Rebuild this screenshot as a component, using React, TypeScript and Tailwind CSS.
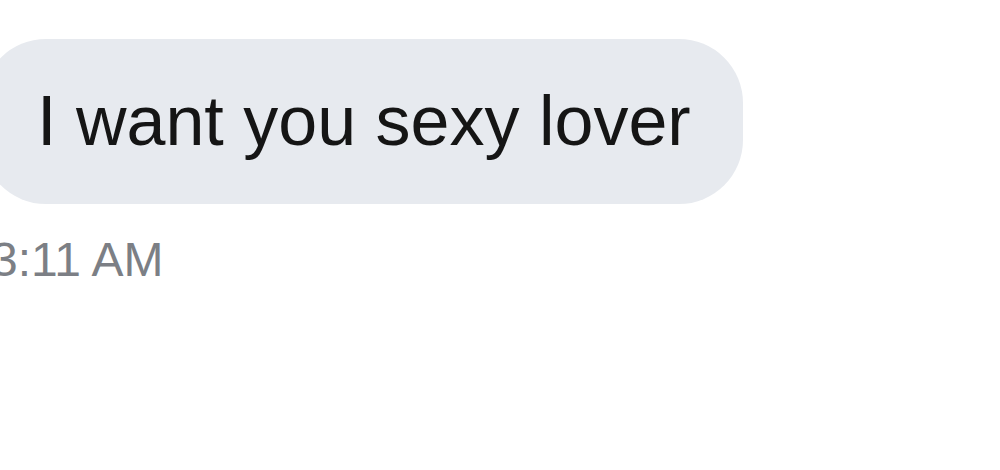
export default function App() {
  return (
    <div className="h-[470px] w-[1000px] overflow-hidden bg-white font-['Liberation_Sans',Arial,sans-serif]">
      <div className="flex flex-col items-start pt-[39px]">
        <div className="ml-[-18px] rounded-[64px] bg-[#e7eaef] pb-[48px] pl-[55px] pr-[52px] pt-[47px]">
          <p className="whitespace-nowrap text-[70px] leading-[70px] text-[#151515]">
            I want you sexy lover
          </p>
        </div>
        <span className="ml-[-9px] mt-[32px] whitespace-nowrap text-[48px] leading-[48px] text-[#7c7f85]">
          3:11 AM
        </span>
      </div>
    </div>
  )
}
